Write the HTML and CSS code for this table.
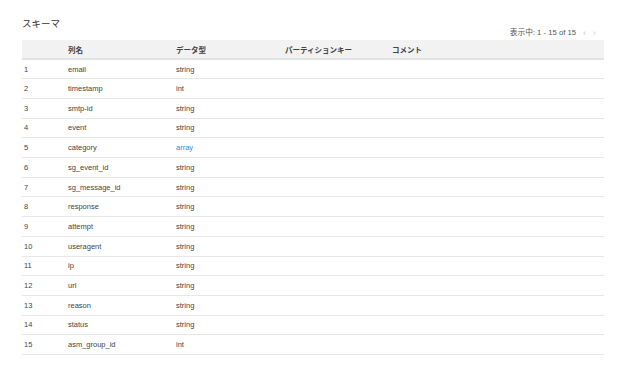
FILE: index.html
```html
<!DOCTYPE html>
<html lang="ja">

<head>
    <meta charset="UTF-8">
    <meta name="viewport" content="width=device-width, initial-scale=1.0">
    <link rel="stylesheet" href="styles.css">
</head>

<body>
    <div class="schema-panel">
        <h2 class="panel-title">スキーマ</h2>
        <div class="pager">
            <span>表示中: 1 - 15 of 15</span>
            <span class="pager-arrow">&lsaquo;</span>
            <span class="pager-arrow">&rsaquo;</span>
        </div>
        <table class="schema-table">
            <thead>
                <tr>
                    <th class="col-num"></th>
                    <th class="col-name">列名</th>
                    <th class="col-type">データ型</th>
                    <th class="col-part">パーティションキー</th>
                    <th>コメント</th>
                </tr>
            </thead>
            <tbody id="schema-rows"></tbody>
        </table>
    </div>

    <script>
        const columns = [
            ['email', 'string'],
            ['timestamp', 'int'],
            ['smtp-id', 'string'],
            ['event', 'string'],
            ['category', 'array'],
            ['sg_event_id', 'string'],
            ['sg_message_id', 'string'],
            ['response', 'string'],
            ['attempt', 'string'],
            ['useragent', 'string'],
            ['ip', 'string'],
            ['url', 'string'],
            ['reason', 'string'],
            ['status', 'string'],
            ['asm_group_id', 'int']
        ];

        document.getElementById('schema-rows').innerHTML = columns.map((col, i) => `
            <tr>
                <td>${i + 1}</td>
                <td>${col[0]}</td>
                <td${col[1] === 'array' ? ' class="type-link"' : ''}>${col[1]}</td>
                <td></td>
                <td></td>
            </tr>
        `).join('');
    </script>
</body>

</html>
```

FILE: styles.css
```css
* {
    margin: 0;
    padding: 0;
    box-sizing: border-box;
}

body {
    background: white;
    font-family: 'Liberation Sans', 'Noto Sans CJK JP', sans-serif;
    color: #444;
}

.schema-panel {
    width: 582px;
    margin: 17px 0 0 22px;
}

.panel-title {
    font-size: 9.5px;
    font-weight: normal;
    color: #333;
    line-height: 12px;
    padding-top: 1px;
}

.pager {
    display: flex;
    justify-content: flex-end;
    align-items: center;
    gap: 7px;
    font-size: 7.7px;
    color: #555;
    line-height: 10px;
    margin-top: -2px;
    padding-right: 8px;
}

.pager-arrow {
    color: #ccc;
    font-size: 9px;
}

.schema-table {
    width: 100%;
    border-collapse: collapse;
    margin-top: 2px;
    font-size: 7.5px;
}

.schema-table th {
    background: #f2f2f2;
    text-align: left;
    font-weight: bold;
    color: #444;
    height: 19px;
    border-bottom: 2px solid #e3e3e3;
    padding-left: 2px;
}

.schema-table td {
    height: 19.71px;
    border-bottom: 1px solid #e8e8e8;
    color: #444;
    padding-left: 2px;
}

.col-num {
    width: 44px;
}

.col-name {
    width: 108px;
}

.col-type {
    width: 109px;
}

.col-part {
    width: 107px;
}

.schema-table .type-link {
    color: #2e8fd8;
}
```
